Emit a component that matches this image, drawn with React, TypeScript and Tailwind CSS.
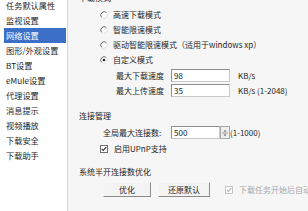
import React from 'react';

const FONT = { fontFamily: '"Noto Sans CJK SC", "Liberation Sans", sans-serif' };

const navItems = [
  '任务默认属性',
  '监视设置',
  '网络设置',
  '图形/外观设置',
  'BT设置',
  'eMule设置',
  '代理设置',
  '消息提示',
  '视频播放',
  '下载安全',
  '下载助手',
];

function Radio({ checked }: { checked?: boolean }) {
  return (
    <svg width="8" height="8" viewBox="0 0 8 8" className="shrink-0">
      <circle cx="4" cy="4" r="3.4" fill="#fff" />
      <path d="M6.4 1.6 A3.4 3.4 0 0 0 1.6 6.4" fill="none" stroke="#6a6a6a" strokeWidth="1" />
      <path d="M1.6 6.4 A3.4 3.4 0 0 0 6.4 1.6" fill="none" stroke="#e0e0e0" strokeWidth="1" />
      {checked && <circle cx="4" cy="4" r="1.3" fill="#222" />}
    </svg>
  );
}

function Check({ disabled }: { disabled?: boolean }) {
  const c = disabled ? '#b4b4b4' : '#333';
  return (
    <svg width="8" height="8" viewBox="0 0 8 8" className="shrink-0">
      <rect x="0.5" y="0.5" width="7" height="7" fill="#fff" stroke={disabled ? '#c4c4c4' : '#6f6f6f'} />
      <path d="M1.8 3.8 L3.3 5.4 L6.3 2.2" fill="none" stroke={c} strokeWidth="1.2" />
    </svg>
  );
}

function Field({ value, w }: { value: string; w: string }) {
  return (
    <div
      className={`${w} h-[13px] bg-white border border-[#c9c9c9] border-t-[#8f8f8f] border-l-[#8f8f8f] flex items-center pl-[2px] text-[8px] text-[#222]`}
    >
      {value}
    </div>
  );
}

export default function App() {
  return (
    <div className="w-[308px] h-[211px] overflow-hidden flex bg-white text-[#1e1e1e]" style={FONT}>
      <aside className="w-[68px] shrink-0 bg-white border-r border-[#d6d6d6] flex flex-col text-[8.2px]">
        <div className="-mt-[2.5px]">
          {navItems.map((item, i) => (
            <div
              key={item}
              className={`h-[15px] flex items-center ml-[4px] mr-[1px] pl-[2px] whitespace-nowrap ${
                i === 2 ? 'bg-[#3c6fc7] text-white' : ''
              }`}
            >
              {item}
            </div>
          ))}
        </div>
      </aside>
      <div className="w-[2px] bg-[#ececec]" />

      <main className="flex-1 bg-[#f6f6f6] pl-[11px] text-[8px] whitespace-nowrap">
        <div className="h-[15px] -mt-[10px] mb-[2px] flex items-center">下载模式</div>

        <div className="pl-[21px]">
          {[
            ['高速下载模式', false],
            ['智能限速模式', false],
            ['驱动智能限速模式（适用于windows xp）', false],
            ['自定义模式', true],
          ].map(([label, on]) => (
            <div key={label as string} className="h-[15px] flex items-center gap-[5px]">
              <Radio checked={on as boolean} />
              <span>{label}</span>
            </div>
          ))}
        </div>

        <div className="pl-[37px] mt-[1px]">
          <div className="h-[15px] flex items-center">
            <span className="w-[55px]">最大下载速度</span>
            <Field value="98" w="w-[59px]" />
            <span className="ml-[8px]">KB/s</span>
          </div>
          <div className="h-[15px] flex items-center">
            <span className="w-[55px]">最大上传速度</span>
            <Field value="35" w="w-[59px]" />
            <span className="ml-[8px]">KB/s (1-2048)</span>
          </div>
        </div>

        <div className="h-[15px] mt-[10px] flex items-center">连接管理</div>

        <div className="pl-[24px] mt-[2px] h-[15px] flex items-center">
          <span className="w-[68px]">全局最大连接数:</span>
          <Field value="500" w="w-[49px]" />
          <div className="w-[10px] h-[13px] bg-[#efefef] border border-[#a8a8a8] flex flex-col items-center justify-center">
            <svg width="6" height="10" viewBox="0 0 6 10">
              <path d="M1.5 3.5 L3 2 L4.5 3.5Z" fill="#555" />
              <line x1="0" y1="5" x2="6" y2="5" stroke="#9a9a9a" />
              <path d="M1.5 6.5 L3 8 L4.5 6.5Z" fill="#555" />
            </svg>
          </div>
          <span>(1-1000)</span>
        </div>

        <div className="pl-[21px] mt-[1px] h-[15px] flex items-center gap-[6px]">
          <Check />
          <span>启用UPnP支持</span>
        </div>

        <div className="h-[15px] mt-[8px] flex items-center">系统半开连接数优化</div>

        <div className="pl-[24px] mt-[3px] flex items-center">
          <button className="w-[48px] h-[15px] bg-[#f3f3f3] border border-[#f7f7f7] border-r-[#8c8c8c] border-b-[#8c8c8c] text-[8px] text-[#1e1e1e]">
            优化
          </button>
          <button className="ml-[7px] w-[52px] h-[15px] bg-[#f3f3f3] border border-[#f7f7f7] border-r-[#8c8c8c] border-b-[#8c8c8c] text-[8px] text-[#1e1e1e]">
            还原默认
          </button>
          <div className="ml-[15px] flex items-center gap-[6px] text-[#a8a8a8]">
            <Check disabled />
            <span>下载任务开始后自动优化</span>
          </div>
        </div>
      </main>
    </div>
  );
}
